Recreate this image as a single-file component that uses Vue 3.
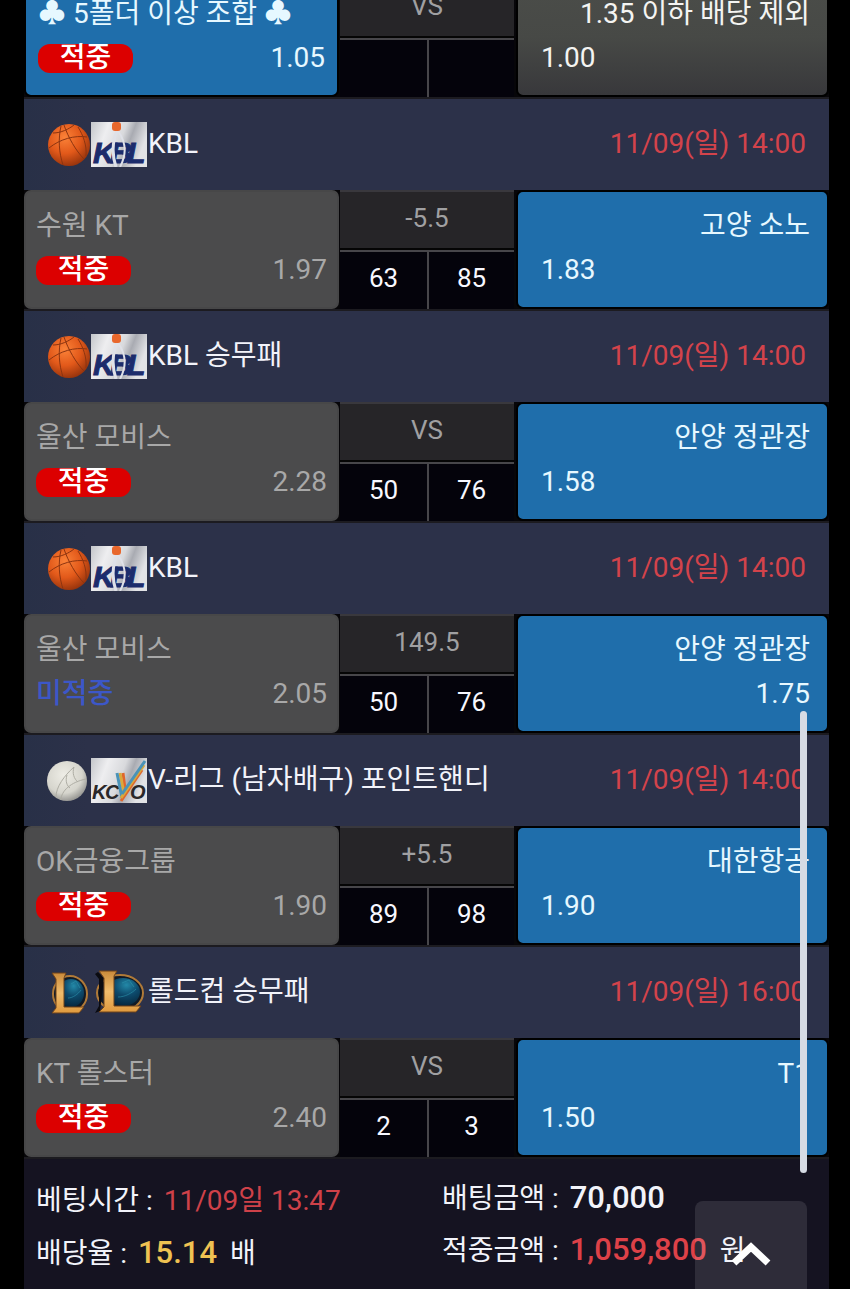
<script setup>
import {ref} from 'vue';

const bonus = {
  home: '♣ 5폴더 이상 조합 ♣',
  homeOdds: '1.05',
  line: 'VS',
  away: '1.35 이하 배당 제외',
  awayOdds: '1.00'
};

const games = ref([
  {
    id: 1, sport: 'basketball', league: 'KBL', date: '11/09(일) 14:00',
    home: '수원 KT', homeOdds: '1.97', line: '-5.5', homeScore: 63, awayScore: 85,
    away: '고양 소노', awayOdds: '1.83', hit: true
  },
  {
    id: 2, sport: 'basketball', league: 'KBL 승무패', date: '11/09(일) 14:00',
    home: '울산 모비스', homeOdds: '2.28', line: 'VS', homeScore: 50, awayScore: 76,
    away: '안양 정관장', awayOdds: '1.58', hit: true
  },
  {
    id: 3, sport: 'basketball', league: 'KBL', date: '11/09(일) 14:00',
    home: '울산 모비스', homeOdds: '2.05', line: '149.5', homeScore: 50, awayScore: 76,
    away: '안양 정관장', awayOdds: '1.75', hit: false
  },
  {
    id: 4, sport: 'volleyball', league: 'V-리그 (남자배구) 포인트핸디', date: '11/09(일) 14:00',
    home: 'OK금융그룹', homeOdds: '1.90', line: '+5.5', homeScore: 89, awayScore: 98,
    away: '대한항공', awayOdds: '1.90', hit: true
  },
  {
    id: 5, sport: 'lol', league: '롤드컵 승무패', date: '11/09(일) 16:00',
    home: 'KT 롤스터', homeOdds: '2.40', line: 'VS', homeScore: 2, awayScore: 3,
    away: 'T1', awayOdds: '1.50', hit: true
  }
]);

const scrollToTop = () => {
  window.scrollTo({top: 0, behavior: 'smooth'});
};
</script>

<template>
  <svg class="defs" aria-hidden="true">
    <defs>
      <radialGradient id="orange" cx="0.4" cy="0.32" r="0.7">
        <stop offset="0" stop-color="#fb8238" />
        <stop offset="0.55" stop-color="#e2591a" />
        <stop offset="1" stop-color="#98340c" />
      </radialGradient>
      <radialGradient id="ivory" cx="0.42" cy="0.35" r="0.7">
        <stop offset="0" stop-color="#eeede6" />
        <stop offset="0.65" stop-color="#d6d5cd" />
        <stop offset="1" stop-color="#8b8b88" />
      </radialGradient>
      <linearGradient id="silver" x1="0" y1="0" x2="1" y2="0.3">
        <stop offset="0" stop-color="#c4c6ca" />
        <stop offset="0.3" stop-color="#eeeef0" />
        <stop offset="0.6" stop-color="#d8d9dc" />
        <stop offset="0.75" stop-color="#a9abb2" />
        <stop offset="1" stop-color="#e2e3e6" />
      </linearGradient>
      <linearGradient id="gold" x1="0" y1="0" x2="0" y2="1">
        <stop offset="0" stop-color="#c98a3a" />
        <stop offset="0.5" stop-color="#f0bc6c" />
        <stop offset="1" stop-color="#e09a3e" />
      </linearGradient>
      <radialGradient id="teal" cx="0.6" cy="0.25" r="0.8">
        <stop offset="0" stop-color="#2389a8" />
        <stop offset="0.45" stop-color="#0d4a6c" />
        <stop offset="1" stop-color="#062338" />
      </radialGradient>
    </defs>
  </svg>

  <main class="slip">
    <section class="row">
      <div class="team home picked">
        <p class="name">{{ bonus.home }}</p>
        <p class="odds"><span class="badge">적중</span><span>{{ bonus.homeOdds }}</span></p>
      </div>
      <div class="versus">
        <span class="line">{{ bonus.line }}</span>
        <span class="score"></span>
        <span class="score"></span>
      </div>
      <div class="team away plain">
        <p class="name">{{ bonus.away }}</p>
        <p class="odds">{{ bonus.awayOdds }}</p>
      </div>
    </section>

    <section v-for="game in games" :key="game.id">
      <header class="league">
        <template v-if="game.sport === 'basketball'">
          <svg class="ball" viewBox="0 0 44 44">
            <circle cx="22" cy="22" r="21" fill="url(#orange)" />
            <g fill="none" stroke="#8c3410" stroke-width="1">
              <path d="M6 10C14 10 22 6 27 2" />
              <path d="M2 25C13 16 28 12 40 14" />
              <path d="M14 3C11 16 12 30 16 42" />
              <path d="M17 2C21 14 29 28 37 36" />
              <path d="M31 4C36 12 40 22 39 33" />
            </g>
          </svg>
          <svg class="logo" viewBox="0 0 56 45">
            <rect width="56" height="45" fill="url(#silver)" />
            <text class="kbl" y="41"><tspan x="2">K</tspan><tspan x="19">B</tspan><tspan x="36">L</tspan></text>
            <path d="M26 9C21 20 21 34 25 45" fill="none" stroke="#dfe1e8" stroke-width="3" />
            <path d="M27 9C35 20 36 32 29 45" fill="none" stroke="#dfe1e8" stroke-width="2" />
            <rect x="21" y="0" width="9" height="9" rx="3" fill="#e8672c" />
          </svg>
        </template>
        <template v-else-if="game.sport === 'volleyball'">
          <svg class="ball" viewBox="0 0 44 44">
            <circle cx="20" cy="22" r="20" fill="url(#ivory)" />
            <g fill="none" stroke="#aeada4" stroke-width="1">
              <path d="M9 38C9 28 17 17 27 8" />
              <path d="M14 41C14 32 24 23 39 20" />
              <path d="M27 8C25 14 27 20 31 23" />
              <path d="M20 16C18 22 20 27 23 29" />
            </g>
          </svg>
          <svg class="logo" viewBox="0 0 56 45">
            <rect width="56" height="45" fill="url(#silver)" />
            <text class="kovo" y="41"><tspan x="1">K</tspan><tspan x="14">C</tspan><tspan x="39">O</tspan></text>
            <g fill="none" stroke-width="3">
              <path d="M32 15L34 31" stroke="#e0662c" />
              <path d="M29 15L33 36" stroke="#d9a93c" />
              <path d="M26 15L31 40" stroke="#4a93b8" />
              <path d="M30 43L51 12" stroke="#e0662c" />
              <path d="M30 40L53 7" stroke="#d9a93c" />
              <path d="M31 36L54 3" stroke="#4a93b8" />
            </g>
          </svg>
        </template>
        <template v-else>
          <svg class="ball" viewBox="0 0 44 44">
            <ellipse cx="23" cy="23" rx="17" ry="18" fill="#101a26" stroke="#b07a38" stroke-width="2" />
            <ellipse cx="24" cy="22" rx="13" ry="14" fill="url(#teal)" />
            <path d="M24 13L29 10L33 17M21 27C26 27 31 23 34 19" fill="none" stroke="#2c93ab" opacity="0.6" />
            <path d="M5 2H19L17 7V36H37L32 42H5L9 37V8Z" fill="url(#gold)" stroke="#6e431a" />
          </svg>
          <svg class="logo" viewBox="0 0 56 45">
            <ellipse cx="29" cy="23" rx="23" ry="18" fill="#101a26" stroke="#b07a38" stroke-width="2" />
            <ellipse cx="32" cy="22" rx="17" ry="14" fill="url(#teal)" />
            <path d="M31 13L38 10L43 17M27 27C34 27 41 23 45 19" fill="none" stroke="#2c93ab" opacity="0.6" />
            <path d="M7 2L4 4L8 9V36L4 43L9 41L13 8Z" fill="#0b0b10" />
            <path d="M8 1H26L23 6V36H50L45 42H8L13 37V8Z" fill="url(#gold)" stroke="#6e431a" />
          </svg>
        </template>
        <h2 class="title">{{ game.league }}</h2>
        <time class="date">{{ game.date }}</time>
      </header>

      <div class="row">
        <div class="team home lost">
          <p class="name">{{ game.home }}</p>
          <p class="odds">
            <span v-if="game.hit" class="badge">적중</span>
            <span v-else class="miss">미적중</span>
            <span>{{ game.homeOdds }}</span>
          </p>
        </div>
        <div class="versus">
          <span class="line">{{ game.line }}</span>
          <span class="score">{{ game.homeScore }}</span>
          <span class="score">{{ game.awayScore }}</span>
        </div>
        <div class="team away picked">
          <p class="name">{{ game.away }}</p>
          <p class="odds" :class="{end: !game.hit}">{{ game.awayOdds }}</p>
        </div>
      </div>
    </section>

    <footer class="summary">
      <div>
        <p class="item">베팅시간 : <span class="time">11/09일 13:47</span></p>
        <p class="item">배당율 : <b class="rate">15.14</b> 배</p>
      </div>
      <div class="money">
        <p class="item">배팅금액 : <b>70,000</b></p>
        <p class="item">적중금액 : <b class="win">1,059,800</b> 원</p>
      </div>
    </footer>
  </main>

  <div class="thumb"></div>
  <button class="to-top" type="button" aria-label="맨 위로" @click="scrollToTop">
    <svg viewBox="0 0 40 26">
      <path d="M3 22L20 6L37 22" fill="none" stroke="#fff" stroke-width="7" />
    </svg>
  </button>
</template>

<style>
body {
  margin: 0;
  background: #000;
  overflow-x: hidden;
}
</style>

<style scoped>
.defs {
  position: absolute;
  width: 0;
  height: 0;
}

.slip {
  box-sizing: border-box;
  min-height: calc(100vh + 22px);
  margin: -22px 21px 0 24px;
  background: #151321;
  color: #f2f3fa;
  font-family: Roboto, "Noto Sans CJK KR", sans-serif;
  font-size: 28px;
}

.name,
.odds,
.item,
.title {
  margin: 0;
  font-size: 28px;
  font-weight: 400;
  white-space: nowrap;
}

.row {
  display: grid;
  grid-template-columns: 316fr 176fr 313fr;
  height: 119px;
  border-bottom: 2px solid #1c1b20;
  background: #070609;
}

.team {
  box-sizing: border-box;
  padding-top: 12px;
  border: 2px solid #000;
  border-radius: 7px;
  line-height: 44px;
}

.home {
  margin-right: 1px;
  padding-left: 10px;
  padding-right: 10px;
}

.home.picked {
  padding-left: 12px;
  padding-right: 12px;
}

.away {
  padding-left: 23px;
  padding-right: 17px;
}

.away .name {
  text-align: right;
}

.picked {
  background: #1f6eab;
  color: #e6f8ff;
}

.plain {
  background: linear-gradient(#4b4d49, #474946 50%, #38383b);
  color: #f4f4f2;
}

.lost {
  background: #4b4b4c;
  border-color: #474748;
  color: #a8a8a8;
}

.odds {
  display: flex;
  align-items: center;
  justify-content: space-between;
}

.away .odds {
  justify-content: flex-start;
}

.away .odds.end {
  justify-content: flex-end;
}

.badge {
  width: 95px;
  height: 29px;
  border-radius: 12px;
  background: #dc0000;
  color: #fff;
  font-weight: 500;
  line-height: 28px;
  text-align: center;
}

.miss {
  color: #3c57c8;
  font-weight: 500;
}

.versus {
  display: grid;
  grid-template-columns: 1fr 1fr;
  grid-template-rows: 60px 59px;
  margin-right: 2px;
  text-align: center;
}

.line {
  box-sizing: border-box;
  grid-column: 1 / 3;
  border-top: 2px solid #39383d;
  border-bottom: 2px solid #050505;
  background: #262528;
  color: #a0a0a2;
  font-size: 26px;
  line-height: 52px;
}

.score {
  box-sizing: border-box;
  border-top: 2px solid #47464a;
  background: #04030b;
  color: #f8f8ff;
  font-size: 26px;
  line-height: 52px;
}

.score + .score {
  border-left: 2px solid #47464a;
}

.league {
  display: flex;
  align-items: center;
  height: 91px;
  padding: 0 23px;
  background: linear-gradient(90deg, #283047, #2c3149 8%);
}

.ball {
  flex: none;
  width: 44px;
  height: 44px;
}

.logo {
  flex: none;
  width: 56px;
  height: 45px;
}

.kbl {
  fill: #1c2c6c;
  stroke: #1c2c6c;
  font: italic bold 30px "Liberation Sans", sans-serif;
}

.kovo {
  fill: #2a2829;
  font: italic bold 20px "Liberation Sans", sans-serif;
}

.title {
  flex: 1;
  padding-bottom: 2px;
  padding-left: 1px;
  line-height: 40px;
}

.date {
  padding-bottom: 2px;
  color: #d3434b;
  line-height: 40px;
  white-space: nowrap;
}

.summary {
  display: grid;
  grid-template-columns: 418fr 387fr;
  padding-top: 13px;
}

.summary > div {
  padding: 3px 0 0 12px;
}

.summary > .money {
  padding: 0;
}

.item {
  height: 52px;
  line-height: 52px;
}

.item b,
.item .time {
  margin: 0 6px 0 4px;
}

.item b {
  font-size: 31px;
  font-weight: 500;
}

.time {
  color: #cf4149;
}

.rate {
  color: #efc252;
}

.item .win {
  color: #dd4148;
}

.thumb {
  position: fixed;
  top: 711px;
  right: 43px;
  width: 7px;
  height: 462px;
  border-radius: 4px;
  background: #d6dbe4;
}

.to-top {
  position: fixed;
  right: 43px;
  bottom: 0;
  width: 112px;
  height: 88px;
  padding: 20px 0 0;
  border: 0;
  border-radius: 8px 8px 0 0;
  background: rgba(255, 255, 255, 0.11);
  cursor: pointer;
}

.to-top svg {
  width: 40px;
  height: 26px;
}
</style>
